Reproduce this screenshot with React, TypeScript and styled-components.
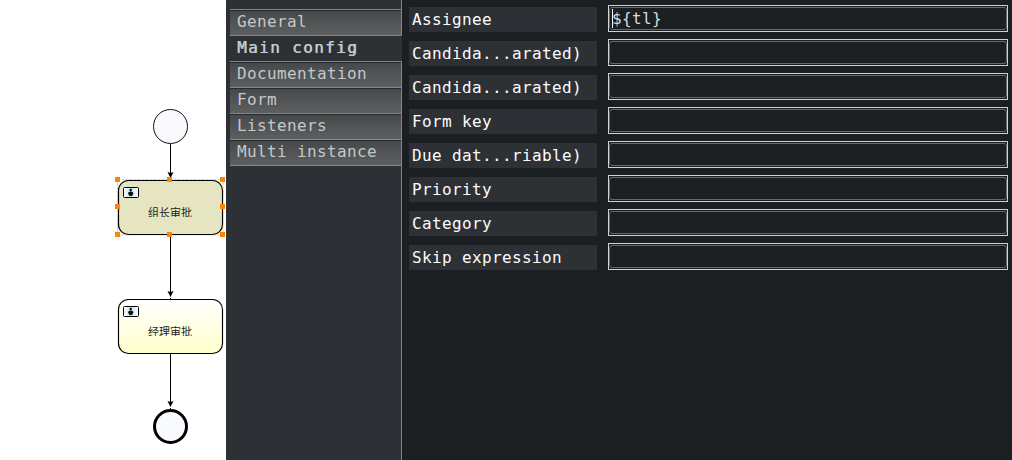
import React from "react";
import styled, { createGlobalStyle } from "styled-components";

const GlobalStyle = createGlobalStyle`
  html, body { margin: 0; padding: 0; overflow: hidden; }
  *, *::before, *::after { box-sizing: border-box; }
`;

const Shell = styled.div`
  display: flex;
  width: 1012px;
  height: 460px;
  background: #1b1f22;
  font-family: "DejaVu Sans Mono", monospace;
  font-size: 16px;
  letter-spacing: 0.37px;
`;

const Canvas = styled.div`
  position: relative;
  flex: 0 0 226px;
  background: #fff;
`;

const Diagram = styled.svg`
  display: block;
  width: 226px;
  height: 460px;
`;

const TaskName = styled.text`
  font-family: "Noto Sans CJK SC", sans-serif;
  font-size: 11px;
  letter-spacing: 0;
  fill: #222;
  text-anchor: middle;
`;

const TabPane = styled.nav`
  display: flex;
  flex-direction: column;
  flex: 0 0 176px;
  background: #2d3135;
`;

const TabSpacer = styled.div<{ $height?: number }>`
  ${(p) => (p.$height ? `flex: 0 0 ${p.$height}px;` : "flex: 1;")}
  border-right: 1px solid #808385;
`;

const Tab = styled.div<{ $selected: boolean }>`
  flex: 0 0 26px;
  height: 26px;
  margin-left: 4px;
  padding-left: 7px;
  border-top: 1px solid #85888a;
  border-right: 1px solid ${(p) => (p.$selected ? "#2d3135" : "#85888a")};
  background: ${(p) =>
    p.$selected ? "#2d3135" : "linear-gradient(#26292b 0 1px, #46494b 1px, #5d5e5f 100%)"};
  color: #c3c9cb;
  text-shadow: ${(p) => (p.$selected ? "0.6px 0 0 #c3c9cb" : "none")};
  letter-spacing: ${(p) => (p.$selected ? "1.37px" : "0.37px")};
  line-height: 24px;
  white-space: pre;
`;

const TabEnd = styled.div`
  flex: 0 0 1px;
  margin-left: 4px;
  background: #85888a;
`;

const Form = styled.div`
  display: flex;
  flex-direction: column;
  flex: 1;
  gap: 7px;
  padding: 5px 4px 0 7px;
`;

const Row = styled.div`
  display: flex;
  gap: 11px;
  height: 27px;
`;

const Label = styled.div`
  width: 188px;
  height: 25px;
  margin-top: 2px;
  padding-left: 3px;
  background: #2d3135;
  color: #fcfcfc;
  line-height: 25px;
  white-space: pre;
`;

const Field = styled.div`
  flex: 1;
  padding: 1px 0;
  border: 1px solid #cfd2d3;
`;

const FieldInner = styled.div`
  display: flex;
  align-items: center;
  height: 23px;
  padding-left: 2px;
  border: 1px solid #65696b;
  border-radius: 3px;
  color: #d3dadd;
  line-height: 21px;
  white-space: pre;
`;

const Caret = styled.span`
  width: 1px;
  height: 19px;
  margin-right: -1px;
  background: #fcfcfc;
`;

const tabs = ["General", "Main config", "Documentation", "Form", "Listeners", "Multi instance"];

const fields = [
  { label: "Assignee", value: "${tl}" },
  { label: "Candida...arated)" },
  { label: "Candida...arated)" },
  { label: "Form key" },
  { label: "Due dat...riable)" },
  { label: "Priority" },
  { label: "Category" },
  { label: "Skip expression" },
];

const handles = [
  [117, 179], [169, 179], [222, 179],
  [117, 206], [222, 206],
  [117, 234], [169, 234], [222, 234],
];

function Arrow({ from, to }: { from: number; to: number }) {
  return (
    <g>
      <path d={`M170.5 ${from}V${to}`} stroke="#000" />
      <path d={`M167.5 ${to - 5}L170.5 ${to - 4}L173.5 ${to - 5}L170.5 ${to + 1}Z`} fill="#000" />
    </g>
  );
}

function UserTask({ y, name, fill }: { y: number; name: string; fill: string }) {
  return (
    <g>
      <clipPath id={`label-${y}`}>
        <rect x="123" y={y + 22} width="95" height="15" />
      </clipPath>
      <rect x="118.5" y={y + 0.5} width="104" height="54" rx="10" fill={fill} stroke="#000" strokeWidth="1.15" />
      <rect x="123.5" y={y + 7.5} width="15" height="10" rx="1" fill="url(#badge)" stroke="#000" />
      <circle cx="130.7" cy={y + 10} r="1.2" fill="#000" />
      <path d={`M128 ${y + 13.5}Q128 ${y + 11.5} 130.7 ${y + 11.5}Q133.4 ${y + 11.5} 133.4 ${y + 13.5}L132 ${y + 16}H129.5Z`} fill="#111" />
      <g clipPath={`url(#label-${y})`}>
        <TaskName x="170" y={y + 36.5}>{name}</TaskName>
      </g>
    </g>
  );
}

export default function App() {
  return (
    <>
      <GlobalStyle />
      <Shell>
        <Canvas>
          <Diagram viewBox="0 0 226 460" fill="none">
            <defs>
              <linearGradient id="task" x1="0" y1="0" x2="0" y2="1">
                <stop offset="0" stopColor="#fff" />
                <stop offset="1" stopColor="#ffffcb" />
              </linearGradient>
              <linearGradient id="badge" x1="0" y1="0" x2="1" y2="0">
                <stop offset="0" stopColor="#fff" />
                <stop offset="0.5" stopColor="#c3e2ef" />
                <stop offset="1" stopColor="#fff" />
              </linearGradient>
            </defs>
            <circle cx="170.5" cy="126.5" r="17" fill="#f9fafd" stroke="#111" />
            <rect x="117.5" y="179.5" width="105.5" height="55.5" stroke="#ffc48a" strokeDasharray="3 1" />
            <UserTask y={180} name="组长审批" fill="#e5e5c1" />
            <UserTask y={299} name="经理审批" fill="url(#task)" />
            <Arrow from={144} to={177} />
            <Arrow from={235} to={296} />
            <Arrow from={354} to={406} />
            <path d="M170.5 298V299M170.5 408V410" stroke="#000" />
            <circle cx="170.5" cy="426.5" r="16" fill="#f9fafd" stroke="#000" strokeWidth="3" />
            {handles.map(([x, y]) => (
              <rect key={`${x}-${y}`} x={x - 2} y={y - 2} width="5" height="5" fill="#ff8400" />
            ))}
          </Diagram>
        </Canvas>
        <TabPane>
          <TabSpacer $height={9} />
          {tabs.map((tab) => (
            <Tab key={tab} $selected={tab === "Main config"}>{tab}</Tab>
          ))}
          <TabEnd />
          <TabSpacer />
        </TabPane>
        <Form>
          {fields.map((field, i) => (
            <Row key={i}>
              <Label>{field.label}</Label>
              <Field>
                <FieldInner>
                  {field.value && <Caret />}
                  {field.value}
                </FieldInner>
              </Field>
            </Row>
          ))}
        </Form>
      </Shell>
    </>
  );
}
